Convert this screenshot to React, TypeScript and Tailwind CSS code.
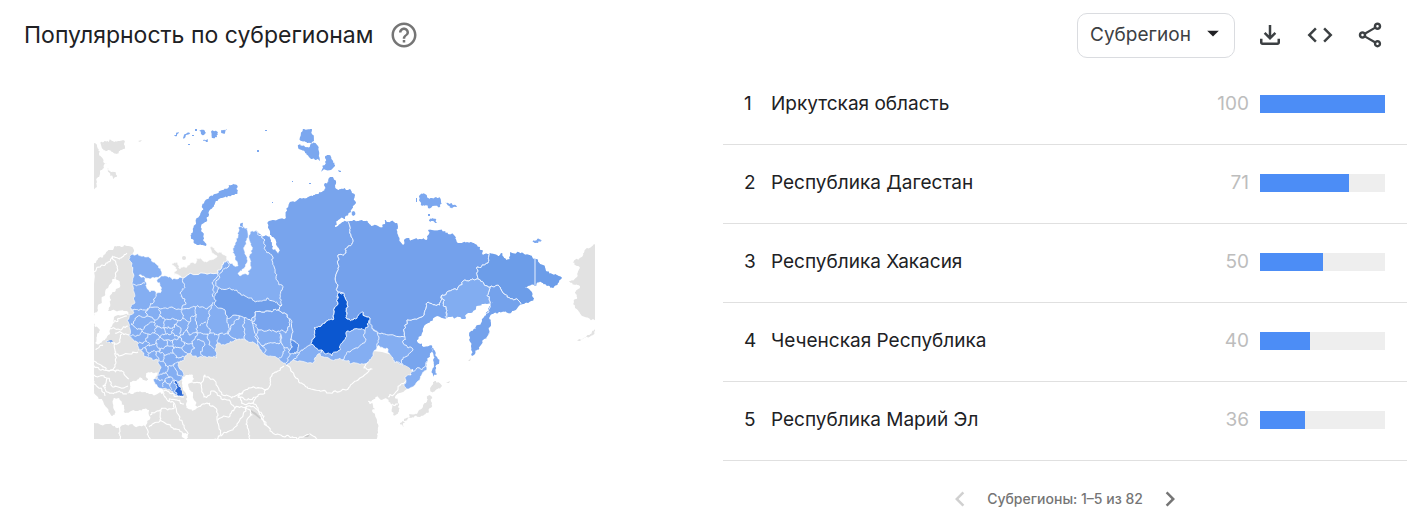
import { useState } from "react";

import {
  MdArrowDropDown,
  MdChevronLeft,
  MdChevronRight,
  MdCode,
  MdHelpOutline,
  MdOutlineFileDownload,
  MdOutlineShare,
} from "react-icons/md";

type Point = [number, number];

const regions = [
  { name: "Иркутская область", value: 100 },
  { name: "Республика Дагестан", value: 71 },
  { name: "Республика Хакасия", value: 50 },
  { name: "Чеченская Республика", value: 40 },
  { name: "Республика Марий Эл", value: 36 },
];

const parse = (s: string): Point[] =>
  s.split(" ").map((p) => p.split(",").map(Number) as Point);

// Splits every edge and nudges the midpoint. The nudge depends only on where
// the midpoint lies, so two regions that share an edge stay glued together.
const roughen = (pts: Point[], closed: boolean, depth: number): Point[] => {
  if (depth === 0) return pts;
  const out: Point[] = [];
  const last = closed ? pts.length : pts.length - 1;
  for (let i = 0; i < last; i++) {
    const [ax, ay] = pts[i];
    const [bx, by] = pts[(i + 1) % pts.length];
    const mx = (ax + bx) / 2;
    const my = (ay + by) / 2;
    const len = Math.hypot(bx - ax, by - ay);
    const amp = len < 1.5 ? 0 : Math.min(len * 0.6, 3);
    const h = Math.sin(mx * 12.9898 + my * 78.233) * 43758.5453;
    const g = Math.sin(mx * 39.346 + my * 11.135) * 24634.6345;
    out.push(pts[i], [
      mx + (h - Math.floor(h) - 0.5) * amp,
      my + (g - Math.floor(g) - 0.5) * amp,
    ]);
  }
  if (!closed) out.push(pts[pts.length - 1]);
  return roughen(out, closed, depth - 1);
};

const toPath = (s: string, closed = true) =>
  "M" +
  roughen(parse(s), closed, 3)
    .map(([x, y]) => `${x.toFixed(1)} ${y.toFixed(1)}`)
    .join("L") +
  (closed ? "Z" : "");

const mainland =
  "130,261 132,254 138,254 146,257 155,262 161,268 162,274 158,278 151,279 143,276 139,275 144,277 145,281 147,284 150,292 155,291 156,294 161,292 160,286 157,282 160,277 170,277 176,279 183,278 190,273 218,273 222,266 227,260 233,264 238,266 235,259 233,250 235,243 238,236 238,228 247,228 247,240 245,252 247,263 242,271 238,273 240,276 248,275 251,268 250,259 252,250 250,242 250,232 257,231 262,238 266,235 271,240 273,250 278,254 276,244 273,237 270,232 269,221 286,218 287,211 290,202 303,198 313,196 322,192 325,183 330,177 336,181 335,187 340,189 350,189 355,196 356,203 351,212 345,219 338,220 335,227 343,222 350,221 357,221 362,220 368,221 372,226 383,227 385,220 390,222 397,223 398,235 403,245 408,238 412,240 420,239 427,240 428,230 442,229 446,233 453,234 460,243 473,243 480,247 483,255 490,253 499,256 502,253 507,260 510,259 510,252 523,253 530,255 536,259 543,265 549,272 555,274 562,278 557,285 553,288 545,284 538,282 535,286 525,287 531,291 533,301 525,303 518,307 508,313 500,312 493,314 489,318 490,327 487,338 480,346 475,354 472,356 471,346 470,338 471,331 478,325 484,317 489,311 493,302 487,304 482,304 475,310 468,313 465,319 450,317 435,317 428,323 422,333 417,341 422,346 432,346 430,355 427,365 424,372 418,381 413,387 408,389 404,385 405,377 411,375 413,369 403,366 393,360 387,348 377,347 373,354 368,362 350,364 342,360 330,359 318,354 314,362 293,360 286,365 277,358 263,353 258,345 245,340 237,340 225,345 218,343 215,350 217,358 202,357 190,353 184,358 178,362 182,370 183,377 178,382 181,388 184,395 178,396 170,390 157,386 153,380 158,375 161,367 158,360 148,358 138,350 137,342 129,335 127,320 134,313 130,308 135,303 133,290 134,276";

const land = [
  // Scandinavia, Europe and Asia in one piece, Russia is painted over it
  "93,265 100,257 110,250 118,246 124,245 133,248 131,255 134,276 140,320 180,350 240,335 260,340 330,345 413,360 413,372 408,388 400,393 395,398 398,407 398,413 393,415 391,404 386,398 382,400 378,395 373,400 368,401 373,404 375,409 372,411 377,423 378,432 376,445 90,445 90,352",
  "101,141 103,146 105,141 109,143 110,139 114,142 118,141 125,142 124,149 119,151 116,154 112,152 107,151 103,149",
  "93,143 97,146 100,152 103,159 107,163 104,168 100,171 97,178 97,187 93,189",
  "108,168 111,172 115,172 117,177 113,179 110,175",
  // Alaska
  "598,243 587,248 583,253 580,258 572,262 577,266 580,268 577,277 569,282 575,285 580,287 575,292 577,297 574,302 575,308 582,316 590,319 598,321",
  "596,329 588,335 577,341 587,337 596,331",
  // Japan
  "433,382 436,381 442,386 437,389 431,392 430,388",
  "430,395 432,403 428,413 420,417 411,418 404,421 409,415 418,412 424,404 427,398",
  "402,421 405,422 403,427 400,424",
];

const nenets =
  "172,263 177,270 174,275 183,278 190,273 218,273 222,266 227,260 224,255 217,252 210,247 214,254 217,257 211,260 207,262 202,259 196,258 196,263 190,263 187,267 180,269 178,263";

const seas = [
  "112,280 118,280 120,287 112,293 110,303 108,311 127,311 132,315 114,317 110,330 105,340 95,343 100,330 94,326 94,313 98,310 102,297 108,288",
  "127,393 130,382 140,377 148,380 147,373 158,372 155,379 162,387 164,393 153,395 140,391 133,394",
  "181,380 185,376 193,375 193,383 188,384 190,390 196,402 197,407 192,411 187,408 186,399 183,390",
  "93,388 98,397 106,407 112,416 115,411 113,400 119,398 124,405 125,413 138,411 149,410 150,419 146,427 134,426 124,425 117,428 108,424 93,423",
  "182,431 188,434 187,440 182,437",
];

const islands = [
  "237,185 238,191 232,195 222,198 215,203 211,209 207,217 204,223 202,232 203,240 206,246 197,245 191,238 193,230 196,224 197,218 203,210 204,203 209,197 218,193 228,188 232,185",
  "303,128 312,128 314,141 307,143 301,141",
  "298,145 307,147 315,143 319,148 320,161 312,159 305,153",
  "327,155 333,162 334,167 321,172 325,162",
  "420,195 425,194 428,198 436,197 441,201 438,207 428,208 421,205",
  "445,202 451,203 457,207 450,208",
  "429,220 433,218 437,223 430,222",
  "532,243 537,239 542,241 538,243",
  "211,132 218,132 217,137 212,138",
  "221,131 227,129 225,133 221,133",
  "183,138 187,133 190,133 184,139",
  "174,135 179,132 177,136",
  "203,141 208,139 207,142",
  "199,131 204,130 206,133 201,134",
  "240,224 243,223 243,226 240,226",
  "351,212 354,211 355,215 352,215",
  "432,345 435,351 439,364 435,366 436,375 433,377 434,362 432,352",
  "106,342 112,340 113,342",
];

const tinted: [string, string][] = [
  // Krasnoyarsk
  [
    "#78a4ed",
    "260,215 330,170 365,190 360,216 348,222 350,230 353,242 347,248 346,253 338,255 337,272 338,292 338,303 335,307 333,320 328,320 322,325 314,328 315,337 312,344 303,350 295,354 292,347 292,322 287,317 278,310 282,305 280,295 283,287 279,285 275,273 273,257 267,253 265,240 258,233",
  ],
  // Yakutia
  [
    "#74a1ec",
    "348,222 355,210 400,205 500,225 489,255 488,263 477,267 478,279 465,280 457,290 442,295 440,305 428,302 422,317 407,320 405,337 388,335 375,331 370,318 363,312 353,320 347,319 347,313 346,300 343,293 338,292 337,272 338,255 346,253 347,248 353,242 350,230",
  ],
  // Chukotka
  [
    "#6c9de9",
    "489,255 492,240 570,250 570,295 540,310 520,310 520,302 507,297 500,287 490,287 478,279 477,267 488,263",
  ],
  // Kamchatka
  [
    "#74a2ec",
    "490,287 500,287 507,297 520,302 520,315 495,325 475,365 464,350 468,325 489,305 489,300",
  ],
  // Magadan
  [
    "#82adf1",
    "478,279 490,287 489,300 489,312 470,325 446,320 446,312 443,303 442,295 457,290 465,280",
  ],
  // Khabarovsk
  [
    "#78a5ee",
    "442,295 443,303 446,312 446,322 436,322 440,350 423,368 416,369 410,371 403,366 403,358 413,350 403,343 405,337 407,320 422,317 428,302 440,305",
  ],
  // Khanty-Mansi
  [
    "#6f9eea",
    "218,288 232,290 240,293 250,298 260,301 268,298 275,302 282,305 278,310 272,312 255,312 252,321 240,316 227,318 225,310 215,305 214,297",
  ],
  // Tomsk
  ["#78a4ee", "255,312 272,312 278,310 287,317 290,326 286,333 276,332 258,330 252,322"],
  // Khakassia
  ["#5c91e8", "290,339 295,341 298,347 294,354 289,351 292,346"],
  // Dagestan
  ["#2a67d4", "174,380 178,383 181,388 185,397 178,396 174,391 177,388"],
  // Irkutsk
  [
    "#0b57d0",
    "338,293 343,293 346,300 347,313 347,319 353,320 358,316 363,312 370,318 368,327 365,331 358,329 347,331 343,342 340,350 332,356 322,350 311,344 315,337 314,328 322,325 328,320 333,320 335,307 338,303",
  ],
];

const regionBorders = [
  // Amur, Zabaykalye, Buryatia
  "370,318 373,326 375,331 379,339 377,347",
  "365,331 365,342 358,348 350,352 342,360",
  "404,367 396,361",
  "322,350 318,354",
  "303,350 299,352 293,360",
  // Southern Siberia
  "252,322 257,336 258,345",
  "258,330 255,336 262,346 272,343 279,344 281,335",
  "262,346 265,353",
  "279,333 281,343 284,347 283,354 279,358",
  "284,347 290,352 286,363",
  "240,316 234,324 228,332 237,340",
  "245,315 243,327 246,340",
  "227,318 229,328 228,334 219,334 218,343",
  // Yamal, Komi, Arkhangelsk, Karelia
  "227,260 229,266 222,272 218,280 216,286 218,288",
  "218,273 212,283 213,297",
  "183,278 185,287 180,293 185,299 182,309 195,307 207,309 213,302",
  "156,294 153,303 149,308 159,308 172,307 182,309",
  "149,308 138,310 130,308",
  "145,283 133,284",
  // Urals and Volga
  "213,305 210,315 207,324 210,333 219,334",
  "195,307 196,314 197,325 197,333 210,333",
  "207,334 209,345 214,349",
  "197,333 192,341 195,348 190,354",
  "197,340 205,344 200,352 204,357",
  "182,309 183,318 189,322 186,330 189,335 197,333",
  "189,322 192,316 196,314",
  "200,326 206,322",
  // Central mesh
  "148,308 147,316 137,317 131,324",
  "147,316 155,320 161,316 165,320 178,321 183,318",
  "161,316 159,309",
  "131,324 140,329 147,325 154,322 155,320",
  "165,320 164,328 172,328 176,324 178,321",
  "164,328 158,326 154,322",
  "129,335 138,335 142,331 140,329",
  "142,331 148,334 154,333 158,326",
  "154,333 160,337 166,334 164,328",
  "166,334 172,333 172,328",
  "172,333 179,337 186,330",
  "176,324 181,328 179,337",
  "148,334 146,341 139,342",
  "146,341 150,346 156,343 160,337",
  "156,343 160,349 167,346 166,340 160,337",
  "166,340 173,340 179,337",
  "173,340 174,348 167,346",
  "174,348 182,348 184,342 179,337",
  "184,342 192,344",
  "182,348 187,353 190,355",
  "138,350 145,347 150,346",
  "145,347 149,353 148,358",
  "149,353 156,352 160,349",
  "156,352 159,360",
  "160,349 164,355 163,361 158,360",
  "164,355 173,353 174,348",
  "173,353 176,358 184,357",
  "163,361 168,367 165,373 158,375",
  "168,367 174,364 178,362",
  "174,364 177,371 183,377",
  "165,373 170,377 176,381",
  "170,377 165,380 163,387",
  "163,380 156,379",
  "165,380 170,384 176,381",
  "170,384 172,390",
];

const worldBorders = [
  // Northern Europe
  "94,272 102,265 108,262 113,257 121,258 127,253",
  "112,256 116,264 116,280",
  "127,316 118,321 113,323",
  "128,326 118,329 110,329",
  "129,335 122,333 115,333",
  "106,342 115,344 120,342 122,334",
  "115,344 115,353 119,356 138,352",
  "115,353 116,362 111,370 103,367 94,361",
  // Central Europe and Balkans
  "94,366 101,370 111,370 120,371 129,379",
  "94,375 100,376 107,378 113,387 128,386",
  "107,378 103,386 111,393 118,392 127,394",
  "94,381 101,388 105,396",
  "96,350 103,345",
  // Middle East
  "164,393 168,401 174,403 172,409 160,410 150,415",
  "174,403 180,417 184,427 188,434",
  "160,410 160,420 149,427",
  "160,420 171,427 182,432",
  "120,425 120,440",
  "146,427 151,440",
  "164,391 174,396 184,397",
  "168,401 177,400 184,404",
  "196,407 207,403 217,411 217,420 220,436 214,440",
  "217,420 230,416 235,408 246,407",
  // Central Asia
  "193,383 201,384 205,375 216,382 221,392 232,398 243,392 250,388 268,389 270,378 275,372 284,366",
  "201,384 204,397 213,391 221,397 232,405 235,408",
  "243,392 238,397 247,400 256,397 268,389",
  "238,397 244,404 252,403 256,397",
  "246,407 254,407 262,414 266,426",
  "246,407 240,419 233,430 221,436",
  "246,407 252,415 246,424 250,440",
  "252,403 258,408 263,420 270,431 285,437 297,439 310,434 318,440",
  // Mongolia
  "286,365 294,375 300,383 311,389 330,393 346,390 356,381 367,373 372,369 364,368 368,362",
  "413,370 408,380 398,390",
  "398,390 388,397",
  "392,404 398,404",
];

const RegionMap = () => {
  return (
    <svg
      viewBox="94 129 501 310"
      className="block w-full"
      role="img"
      aria-label="Популярность по субрегионам"
    >
      <clipPath id="russia">
        <path d={toPath(mainland)} />
      </clipPath>
      <g fill="#e2e2e2">
        {land.map((s) => (
          <path key={s} d={toPath(s)} />
        ))}
      </g>
      <g fill="#fff">
        {seas.map((s) => (
          <path key={s} d={toPath(s)} />
        ))}
      </g>
      <g fill="none" stroke="#fff" strokeWidth={1.1} strokeLinejoin="round">
        {worldBorders.map((s) => (
          <path key={s} d={toPath(s, false)} />
        ))}
      </g>
      <g fill="#c9c9c9">
        <path d="M251 410l5 3 5 5-1 1-5-4-4-3zM304 437l6-3-2 3z" />
      </g>
      <g fill="#7ba7ef">
        {islands.map((s) => (
          <path key={s} d={toPath(s)} />
        ))}
      </g>
      <path d={toPath(mainland)} fill="#84aef2" stroke="#fff" strokeWidth={0.6} />
      <g
        clipPath="url(#russia)"
        fill="none"
        stroke="#e8f0fe"
        strokeWidth={1}
        strokeLinejoin="round"
      >
        {regionBorders.map((s) => (
          <path key={s} d={toPath(s, false)} />
        ))}
        {tinted.map(([fill, s]) => (
          <path key={s} d={toPath(s)} fill={fill} />
        ))}
        <path d="M535 256v31" />
      </g>
      <path d={toPath(nenets)} fill="#e2e2e2" stroke="#fff" strokeWidth={0.6} />
      <g fill="#e2e2e2">
        <circle cx="184" cy="258" r="2" />
        <path d="M138 141l4-1-2 2zM446 383l4-2-1 2zM468 361l3-3-1 3z" />
      </g>
      <g fill="#7ba7ef">
        <path d="M195 129h2v2h-2zM192 135h2v1h-2zM188 144h2v1h-2zM265 130h2v1h-2zM257 150h2v2h-2zM292 181h1v1h-1zM309 183h2v1h-2zM338 170l3 1v1h-2zM416 198h1v4h-1zM428 214h2v2h-2zM272 202h1v1h-1z" />
      </g>
    </svg>
  );
};

const iconButton =
  "flex h-[50px] w-[50px] items-center justify-center rounded-full text-[#3c4043]";

export default function App() {
  const [scope, setScope] = useState("region");

  return (
    <section className="bg-white font-['Inter',sans-serif] text-[#202124]">
      <header className="flex h-[66px] items-center justify-between pt-1 pr-3 pl-6">
        <div className="flex items-center gap-4">
          <h1 className="text-[23px] leading-8">Популярность по субрегионам</h1>
          <button type="button" aria-label="Справка">
            <MdHelpOutline className="size-[30px] text-[#757575]" />
          </button>
        </div>
        <div className="flex items-center">
          <div className="relative mr-2.5">
            <select
              aria-label="Уровень"
              value={scope}
              onChange={(e) => setScope(e.target.value)}
              className="h-[45px] w-[158px] appearance-none rounded-[10px] border border-[#dadce0] bg-white pl-3 text-[19px] text-[#3c4043]"
            >
              <option value="region">Субрегион</option>
              <option value="city">Город</option>
            </select>
            <MdArrowDropDown className="pointer-events-none absolute top-1.5 right-2 size-7" />
          </div>
          <button type="button" aria-label="Скачать" className={iconButton}>
            <MdOutlineFileDownload className="size-[30px]" />
          </button>
          <button type="button" aria-label="Встроить" className={iconButton}>
            <MdCode className="size-[30px]" />
          </button>
          <button type="button" aria-label="Поделиться" className={iconButton}>
            <MdOutlineShare className="size-[30px]" />
          </button>
        </div>
      </header>

      <div className="grid grid-cols-[723fr_684fr]">
        <div className="pt-[63px] pr-32 pl-[94px]">
          <RegionMap />
        </div>

        <div>
          <ol>
            {regions.map((region, i) => (
              <li
                key={region.name}
                className="flex h-[79px] items-center border-b border-[#e0e0e0] pr-[22px] pb-0.5 pl-[21px] text-[19px]"
              >
                <span className="w-[27px]">{i + 1}</span>
                <span className="flex-1">{region.name}</span>
                <span className="mr-[11px] text-[#bdbdbd]">{region.value}</span>
                <div className="h-[18px] w-[125px] bg-[#eeeeee]">
                  <div
                    className="h-full bg-[#4c8df6]"
                    style={{ width: `${region.value}%` }}
                  />
                </div>
              </li>
            ))}
          </ol>
          <nav className="flex h-[62px] items-center justify-center pt-3.5 text-sm font-medium text-[#757575]">
            <button type="button" aria-label="Назад" disabled className="text-[#d0d0d0]">
              <MdChevronLeft className="size-[30px]" />
            </button>
            <span className="px-3">Субрегионы: 1–5 из 82</span>
            <button type="button" aria-label="Вперёд">
              <MdChevronRight className="size-[30px]" />
            </button>
          </nav>
        </div>
      </div>
    </section>
  );
}
